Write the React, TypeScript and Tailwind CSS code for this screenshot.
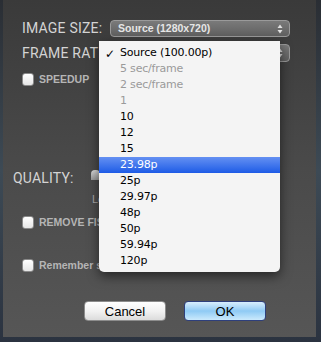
import React from "react";

const label = "font-['Roboto',sans-serif] text-[14px] tracking-[0.2px] text-[#d4d4d4]";
const small = "font-['Liberation_Sans',sans-serif] font-bold text-[10.5px] text-[#b5b5b5]";

function Arrows() {
  return (
    <svg width="6" height="10" viewBox="0 0 6 10" className="shrink-0">
      <path d="M3 0.5 L5.5 4 H0.5 Z" fill="#e0e0e0" />
      <path d="M3 9.5 L5.5 6 H0.5 Z" fill="#e0e0e0" />
    </svg>
  );
}

function Popup({ text, h }: { text: string; h: string }) {
  return (
    <div
      className={`ml-auto mr-[26px] flex w-[180px] ${h} items-center justify-between rounded-[4px] border border-[#9a9a9a] bg-gradient-to-b from-[#7a7a7a] to-[#606060] pl-[7px] pr-[6px]`}
    >
      <span className="font-['Liberation_Sans',sans-serif] text-[10.5px] font-bold text-[#e6e6e6]">
        {text}
      </span>
      <Arrows />
    </div>
  );
}

function Check() {
  return (
    <div className="h-[13px] w-[12px] shrink-0 rounded-[3px] border border-[#8a8a8a] bg-gradient-to-b from-white to-[#e6e6e6]" />
  );
}

const items: { t: string; dis?: boolean; sel?: boolean; hi?: boolean }[] = [
  { t: "Source (100.00p)", sel: true },
  { t: "5 sec/frame", dis: true },
  { t: "2 sec/frame", dis: true },
  { t: "1", dis: true },
  { t: "10" },
  { t: "12" },
  { t: "15" },
  { t: "23.98p", hi: true },
  { t: "25p" },
  { t: "29.97p" },
  { t: "48p" },
  { t: "50p" },
  { t: "59.94p" },
  { t: "120p" },
];

function Menu() {
  return (
    <div className="absolute left-[96px] top-[41px] w-[181px] rounded-b-[5px] bg-[#f4f4f4] pb-[3px] pt-[4px] shadow-[0_4px_12px_rgba(0,0,0,0.55)]">
      {items.map((it) => (
        <div
          key={it.t}
          className={`relative flex h-[16px] items-center pl-[21px] font-['DejaVu_Sans',sans-serif] text-[11px] tracking-[-0.2px] ${
            it.hi
              ? "bg-gradient-to-b from-[#6490f2] to-[#1c5ae6] text-white"
              : it.dis
              ? "text-[#9a9a9a]"
              : "text-black"
          }`}
        >
          {it.sel && <span className="absolute left-[6px] top-[0px] text-[12px] font-bold">✓</span>}
          {it.t}
        </div>
      ))}
    </div>
  );
}

export default function App() {
  return (
    <div className="flex h-[342px] w-[321px] bg-gradient-to-b from-[#2a2e34] via-[#3d4a55] to-[#2b3340] pb-[5px] pl-[3px] pr-[5px]">
      <div className="relative flex flex-1 flex-col bg-gradient-to-b from-[#3a3a3a] via-[#4a4a4a] to-[#565656]">
        {/* image size */}
        <div className="mt-[20px] flex h-[17px] items-center pl-[19px]">
          <span className={label}>IMAGE SIZE:</span>
          <Popup text="Source (1280x720)" h="h-[17px]" />
        </div>
        {/* frame rate, partly under the open menu */}
        <div className="mt-[7px] flex h-[18px] items-center pl-[19px]">
          <span className={`${label} w-[77px] overflow-hidden whitespace-nowrap`}>FRAME RATE:</span>
          <Popup text="" h="h-[18px]" />
        </div>
        {/* speedup */}
        <div className="mt-[11px] flex h-[13px] items-center gap-[5px] pl-[19px]">
          <Check />
          <span className={small}>SPEEDUP</span>
        </div>
        {/* quality */}
        <div className="mt-[82px] flex h-[20px] items-center pl-[10px]">
          <span className={`${label} w-[78px]`}>QUALITY:</span>
          <div className="mb-[6px] h-[10px] w-[9px] rounded-t-[4px] bg-gradient-to-b from-[#dcdcdc] to-[#9a9a9a]" />
        </div>
        <div className="mt-[5px] h-[12px] w-[96px] overflow-hidden whitespace-nowrap pl-[89px] font-['Liberation_Sans',sans-serif] text-[11px] leading-[12px] text-[#a8a8a8]">
          Low
        </div>
        {/* remove fisheye */}
        <div className="mt-[11px] flex h-[13px] items-center gap-[5px] pl-[19px]">
          <Check />
          <span className={`${small} w-[60px] overflow-hidden whitespace-nowrap`}>REMOVE FISHEYE</span>
        </div>
        {/* remember */}
        <div className="mt-[30px] flex h-[13px] items-center gap-[5px] pl-[19px]">
          <Check />
          <span className={`${small} w-[60px] overflow-hidden whitespace-nowrap`}>Remember settings</span>
        </div>
        {/* buttons */}
        <div className="mt-[29px] flex gap-[18px] pl-[81px]">
          <button className="h-[20px] w-[82px] rounded-[4px] border border-[#8c8c8c] bg-gradient-to-b from-white via-[#f2f2f2] to-[#dcdcdc] font-['Liberation_Sans',sans-serif] text-[13px] text-black">
            Cancel
          </button>
          <button className="h-[20px] w-[82px] rounded-[4px] border border-[#2e3f7c] bg-gradient-to-b from-[#d8eefd] via-[#8fcaf4] to-[#cbeafc] font-['Liberation_Sans',sans-serif] text-[13px] text-black">
            OK
          </button>
        </div>
        <Menu />
      </div>
    </div>
  );
}
